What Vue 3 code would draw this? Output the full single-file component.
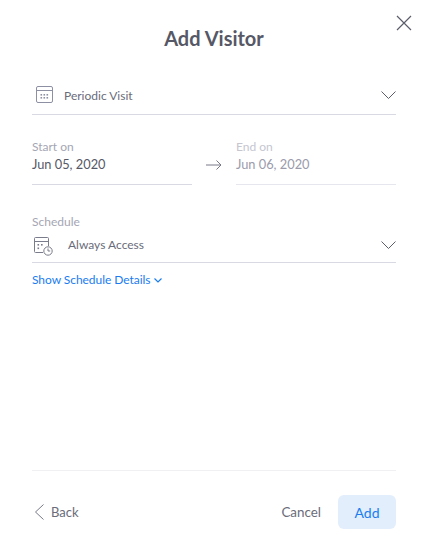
<script setup>
const hours = [0, 1, 2]
</script>

<template>
  <div class="modal">
    <button class="close" aria-label="Close">
      <svg width="16" height="16" viewBox="0 0 16 16" fill="none" stroke="#5b5d6b" stroke-width="1.2"><path d="M1 1l14 14M15 1L1 15" /></svg>
    </button>
    <h1 class="title">Add Visitor</h1>

    <div class="select type">
      <svg class="cal" width="18" height="18" viewBox="0 0 18 18" fill="none" stroke="#8d8fa3">
        <rect x="0.5" y="0.5" width="16" height="16" rx="1.5" />
        <path d="M1 4.5h15" stroke="#8d8fa3" />
        <g v-for="r in hours" :key="r">
          <rect v-for="c in [0, 1]" :key="c" :x="4.5 + r * 3" :y="8 + c * 3" width="1.6" height="1.6" fill="#8d8fa3" stroke="none" />
        </g>
      </svg>
      <span class="select-text">Periodic Visit</span>
      <svg class="chev" width="15" height="8" viewBox="0 0 15 8" fill="none" stroke="#5b5d6b"><path d="M0.5 0.5l7 7 7-7" /></svg>
    </div>

    <div class="dates">
      <div class="date">
        <span class="label">Start on</span>
        <span class="value">Jun 05, 2020</span>
      </div>
      <svg class="arrow" width="18" height="10" viewBox="0 0 18 10" fill="none" stroke="#777988"><path d="M1 5h15M11.5 0.5L16 5l-4.5 4.5" /></svg>
      <div class="date off">
        <span class="label">End on</span>
        <span class="value">Jun 06, 2020</span>
      </div>
    </div>

    <div class="schedule">
      <span class="label">Schedule</span>
      <div class="select sched">
        <svg class="clock" width="19" height="19" viewBox="0 0 19 19" fill="none" stroke="#7a7c8c">
          <path d="M9 15.5H1.5a1 1 0 0 1-1-1V1.5a1 1 0 0 1 1-1h12a1 1 0 0 1 1 1V9" />
          <path d="M1 4.5h13" />
          <rect x="3.5" y="7" width="1.6" height="1.6" fill="#7a7c8c" stroke="none" />
          <rect x="7" y="7" width="1.6" height="1.6" fill="#7a7c8c" stroke="none" />
          <rect x="3.5" y="10.5" width="1.6" height="1.6" fill="#7a7c8c" stroke="none" />
          <circle cx="14" cy="14" r="4.2" />
          <path d="M14 11.5V14h2.2" />
        </svg>
        <span class="select-text">Always Access</span>
        <svg class="chev" width="15" height="8" viewBox="0 0 15 8" fill="none" stroke="#5b5d6b"><path d="M0.5 0.5l7 7 7-7" /></svg>
      </div>
    </div>

    <a class="details">Show Schedule Details
      <svg width="8" height="5" viewBox="0 0 8 5" fill="none" stroke="#1a7cf0" stroke-width="1.2"><path d="M0.5 0.5L4 4l3.5-3.5" /></svg>
    </a>

    <footer class="footer">
      <a class="back">
        <svg width="11" height="16" viewBox="0 0 11 16" fill="none" stroke="#777988"><path d="M9.5 0.5L1.5 8l8 7.5" /></svg>
        Back
      </a>
      <div class="actions">
        <button class="cancel">Cancel</button>
        <button class="add">Add</button>
      </div>
    </footer>
  </div>
</template>

<style>
html, body { margin: 0; background: #fff; }
</style>

<style scoped>
.modal {
  position: relative;
  box-sizing: border-box;
  width: 427px;
  height: 553px;
  padding: 0 31px 0 32px;
  display: flex;
  flex-direction: column;
  font-family: Lato, sans-serif;
  color: #4e505e;
  background: #fff;
}
.close {
  position: absolute;
  top: 15px;
  right: 15px;
  padding: 0;
  border: 0;
  background: none;
  line-height: 0;
}
.title {
  margin: 26px 0 0;
  font-size: 20px;
  line-height: 24px;
  font-weight: 700;
  text-align: center;
  color: #565866;
}
.select {
  display: flex;
  align-items: center;
  border-bottom: 1px solid #d9d9e4;
}
.type {
  margin-top: 28px;
  height: 36px;
}
.select-text {
  font-size: 12px;
  line-height: 16px;
  color: #6a6c7a;
}
.type .select-text { margin-left: 10px; margin-top: -1px; }
.cal { margin-left: 4px; margin-top: -3px; }
.chev { margin-left: auto; margin-right: 0; margin-top: -2px; }
.dates {
  display: flex;
  align-items: flex-start;
  margin-top: 24px;
}
.date {
  flex: 0 0 160px;
  height: 45px;
  display: flex;
  flex-direction: column;
  border-bottom: 1px solid #d9d9e4;
}
.date.off { border-bottom-color: #e6e6ee; }
.date.off .label { color: #c5c6d0; }
.date.off .value { color: #9a9bab; }
.label {
  font-size: 12px;
  line-height: 16px;
  color: #a5a6b3;
}
.value {
  font-size: 12.8px;
  line-height: 20px;
  margin-top: -1px;
  color: #565866;
}
.arrow {
  margin: 21px 13px 0 13px;
  flex: none;
}
.schedule { margin-top: 29px; }
.schedule .label { display: block; }
.sched {
  height: 32px;
}
.clock { margin-left: 2px; }
.sched .select-text { margin-left: 15px; margin-top: -3px; }
.details {
  margin-top: 9px;
  font-size: 12px;
  line-height: 16px;
  color: #1a7cf0;
  letter-spacing: -0.05px;
}
.details svg { vertical-align: 1px; margin-left: 1px; }
.footer {
  margin-top: auto;
  height: 83px;
  box-sizing: border-box;
  border-top: 1px solid #f0f0f3;
  display: flex;
  align-items: center;
  justify-content: space-between;
}
.back {
  display: flex;
  align-items: center;
  gap: 6px;
  font-size: 13px;
  color: #6a6c7a;
  margin-left: 2px;
}
.actions {
  display: flex;
  align-items: center;
  gap: 17px;
}
.cancel, .add {
  font-family: inherit;
  border: 0;
  padding: 0;
}
.cancel {
  font-size: 13.4px;
  background: none;
  color: #6a6c7a;
}
.add {
  font-size: 14px;
  width: 58px;
  height: 34px;
  border-radius: 6px;
  background: #e2eefc;
  color: #1a7cf0;
}
</style>
